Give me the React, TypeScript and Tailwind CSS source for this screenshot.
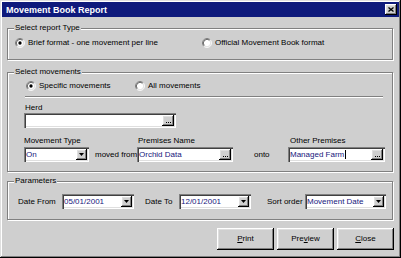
import React from "react";

const face = "bg-[#cfcfcf]";
const raised =
  "shadow-[inset_-1px_-1px_#000,inset_1px_1px_#fff,inset_-2px_-2px_#808080,inset_2px_2px_#dfdfdf]";
const sunken =
  "shadow-[inset_1px_1px_#808080,inset_2px_2px_#404040,inset_-1px_-1px_#fff,inset_-2px_-2px_#dfdfdf]";

function Radio({ checked }: { checked?: boolean }) {
  return (
    <svg width="10" height="10" viewBox="0 0 12 12" className="shrink-0">
      <circle cx="6" cy="6" r="4.5" fill="#fff" />
      <path d="M2.11 9.89A5.5 5.5 0 0 1 9.89 2.11" fill="none" stroke="#808080" />
      <path d="M9.89 2.11A5.5 5.5 0 0 1 2.11 9.89" fill="none" stroke="#fff" />
      <path d="M2.82 9.18A4.5 4.5 0 0 1 9.18 2.82" fill="none" stroke="#404040" />
      <path d="M9.18 2.82A4.5 4.5 0 0 1 2.82 9.18" fill="none" stroke="#dfdfdf" />
      {checked && <circle cx="6" cy="6" r="2" fill="#000" />}
    </svg>
  );
}

function Group({ title, className, children }: { title: string; className: string; children: React.ReactNode }) {
  return (
    <div className={`relative w-[386px] border border-[#808080] shadow-[inset_1px_1px_#fff,1px_1px_#fff] ${className}`}>
      <span className={`absolute left-[6px] top-[-6px] px-[1px] leading-[10px] ${face}`}>{title}</span>
      {children}
    </div>
  );
}

function Combo({ value, className }: { value: string; className: string }) {
  return (
    <div className={`flex h-[15px] bg-white p-[2px] ${sunken} ${className}`}>
      <span className="flex-1 truncate leading-[11px] text-[#16167c]">{value}</span>
      <span className={`flex w-[11px] items-center justify-center ${face} ${raised}`}>
        <svg width="5" height="3" viewBox="0 0 5 3">
          <path d="M0 0h5L2.5 3z" fill="#000" />
        </svg>
      </span>
    </div>
  );
}

function Lookup({ value, className, caret }: { value: string; className: string; caret?: boolean }) {
  return (
    <div className={`flex h-[15px] bg-white p-[2px] ${sunken} ${className}`}>
      <span className="flex flex-1 items-center truncate leading-[11px] text-[#16167c]">
        {value}
        {caret && <span className="ml-px inline-block h-[9px] w-px bg-black" />}
      </span>
      <span className={`flex w-[12px] items-end justify-center pb-[3px] ${face} ${raised}`}>
        <span className="flex gap-px">
          <span className="h-px w-px bg-black" />
          <span className="h-px w-px bg-black" />
          <span className="h-px w-px bg-black" />
        </span>
      </span>
    </div>
  );
}

function Button({ children }: { children: React.ReactNode }) {
  return (
    <button className={`flex h-[22px] w-[57px] items-center justify-center ${face} ${raised}`}>{children}</button>
  );
}

export default function App() {
  return (
    <div
      className={`flex h-[258px] w-[401px] flex-col p-[2px] font-['Liberation_Sans',Arial,sans-serif] text-[8px] leading-[10px] text-black ${face} shadow-[inset_-1px_-1px_#000,inset_1px_1px_#dfdfdf,inset_-2px_-2px_#808080,inset_2px_2px_#fff]`}
    >
      <div className="flex h-[15px] items-center bg-[#0e1a7c] pl-[4px] pr-[2px]">
        <span className="flex-1 text-[9px] font-bold text-white">Movement Book Report</span>
        <span className={`flex h-[11px] w-[12px] items-center justify-center ${face} ${raised}`}>
          <svg width="6" height="5" viewBox="0 0 6 5">
            <path d="M0.5 0.5l5 4M5.5 0.5l-5 4" stroke="#000" strokeWidth="1.3" />
          </svg>
        </span>
      </div>

      <div className="flex flex-col pl-[5px] pt-[11px]">
        <Group title="Select report Type" className="h-[32px] pl-[7px] pt-[9px]">
          <div className="flex items-center">
            <label className="flex w-[187px] items-center gap-[3px]">
              <Radio checked />
              <span>Brief format - one movement per line</span>
            </label>
            <label className="flex items-center gap-[3px]">
              <Radio />
              <span>Official Movement Book format</span>
            </label>
          </div>
        </Group>

        <Group title="Select movements" className="mt-[12px] h-[100px] pt-[8px]">
          <div className="flex items-center pl-[18px]">
            <label className="flex w-[109px] items-center gap-[3px]">
              <Radio checked />
              <span>Specific movements</span>
            </label>
            <label className="flex items-center gap-[3px]">
              <Radio />
              <span>All movements</span>
            </label>
          </div>

          <div className="ml-[17px] mt-[5px] h-px w-[358px] bg-[#808080] shadow-[0_1px_#fff]" />

          <div className="ml-[16px] mt-[6px] flex flex-col">
            <span className="pl-[1px]">Herd</span>
            <Lookup value="" className="mt-0 w-[152px]" />
          </div>

          <div className="mt-[8px] flex items-end pl-[16px]">
            <div className="flex w-[65px] flex-col">
              <span className="whitespace-nowrap">Movement Type</span>
              <Combo value="On" className="mt-[1px] w-[65px]" />
            </div>
            <span className="ml-[6px] h-[15px] w-[42px] whitespace-nowrap leading-[15px]">moved from</span>
            <div className="flex w-[96px] flex-col">
              <span className="whitespace-nowrap pl-[1px]">Premises Name</span>
              <Lookup value="Orchid Data" className="mt-[1px] w-[96px]" />
            </div>
            <span className="ml-[21px] h-[15px] w-[34px] leading-[15px]">onto</span>
            <div className="flex w-[97px] flex-col">
              <span className="whitespace-nowrap pl-[2px]">Other Premises</span>
              <Lookup value="Managed Farm" caret className="mt-[1px] w-[97px]" />
            </div>
          </div>
        </Group>

        <Group title="Parameters" className="mt-[9px] h-[39px] pt-[12px]">
          <div className="flex items-center pl-[10px]">
            <span className="w-[44px] whitespace-nowrap">Date From</span>
            <Combo value="05/01/2001" className="w-[72px]" />
            <span className="ml-[11px] w-[34px] whitespace-nowrap">Date To</span>
            <Combo value="12/01/2001" className="w-[72px]" />
            <span className="ml-[16px] w-[38px] whitespace-nowrap">Sort order</span>
            <Combo value="Movement Date" className="w-[81px]" />
          </div>
        </Group>

        <div className="mt-[8px] flex gap-[3px] pl-[210px]">
          <Button>
            <u>P</u>rint
          </Button>
          <Button>
            Pre<u>v</u>iew
          </Button>
          <Button>
            <u>C</u>lose
          </Button>
        </div>
      </div>
    </div>
  );
}
